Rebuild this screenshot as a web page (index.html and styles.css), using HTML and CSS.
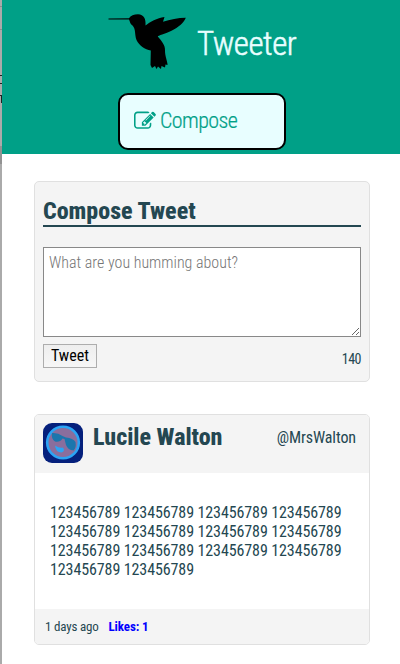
FILE: index.html
```html
<!DOCTYPE html>
<html lang="en">
<head>
<meta charset="utf-8">
<title>Tweeter</title>
<link rel="stylesheet" href="styles.css">
</head>
<body>
<div class="edge"><svg width="2" height="664" viewBox="0 0 2 664"><path d="M0 6.500h2M0 29.500h2" stroke="#8c8c8c"/><path d="M0 75.500h2M0 83.500h2M0 95.500h2M1.500 95v8" stroke="#222"/><path d="M0 146h2v18H0z" fill="#929292"/></svg></div>
<div class="page">
  <header class="nav">
    <div class="brand">
      <svg class="bird" viewBox="0 0 80 58" width="80" height="58"><path d="M0.500 4.500V5.500L21 5.500C22 7.500 22 10 24.500 11.500C28 15 26.500 21 28.500 26C31 31.500 37 35.500 42.800 36.500L42.500 51L44 54L47 52L48.500 55L50 52.500L53 55L53.500 52L57 53.500L57.500 50.500L59.500 51C60 49 56.800 42 57 36.500C57.500 31 53 26.500 49.800 22.500C50 21.500 57 20 63 17C71 13 76 8.500 77.800 3.700C70 3.800 62 5.500 55 7.800L56.500 3C49 4 42 8 37.500 11.500C38 5 36 0.500 30 0.300C26 0.300 22.500 1.800 21 4.200Z"/></svg>
      <h1>Tweeter</h1>
    </div>
    <div class="compose-btn">
      <svg viewBox="0 0 1792 1792" width="22" height="22" fill="currentColor"><path d="M888 1184l116-116-152-152-116 116v56h96v96h56zm440-720q-16-16-33 1l-350 350q-17 17-1 33t33-1l350-350q17-17 1-33zm80 594v190q0 119-84.500 203.500t-203.500 84.500h-832q-119 0-203.500-84.500t-84.500-203.500v-832q0-119 84.500-203.500t203.500-84.500h832q63 0 117 25 15 7 18 23 3 17-9 29l-49 49q-14 14-32 8-23-6-45-6h-832q-66 0-113 47t-47 113v832q0 66 47 113t113 47h832q66 0 113-47t47-113v-126q0-13 9-22l64-64q15-15 35-7t20 29zm-96-738l288 288-672 672h-288v-288zm444 132l-92 92-288-288 92-92q28-28 68-28t68 28l152 152q28 28 28 68t-28 68z"/></svg>
      <span>Compose</span>
    </div>
  </header>
  <main>
    <section class="card new-tweet">
      <h2>Compose Tweet</h2>
      <textarea placeholder="What are you humming about?"></textarea>
      <div class="actions"><button>Tweet</button><span class="counter">140</span></div>
    </section>
    <article class="card tweet">
      <header>
        <svg class="avatar" viewBox="0 0 40 40" width="40" height="40"><rect width="40" height="40" rx="9" fill="#05207c"/><circle cx="20" cy="19.500" r="15.800" fill="#8a6e9d" stroke="#2ba4f5" stroke-width="2.600"/><path d="M9 10Q15 9.500 19.500 13L23 14.500Q30 15 32.500 19Q33.500 25 30.500 27.500Q25 27 23 22L21.500 16L19.500 15.500Q17 19.500 12 18.500Q8 16 9 10Z" fill="#1b76ad"/><path d="M12 22.500Q16.500 25.500 20 24.500Q22.500 28 18.500 29.500Q12.500 29 12 22.500Z" fill="#2ba4f5"/></svg>
        <h2>Lucile Walton</h2>
        <span class="handle">@MrsWalton</span>
      </header>
      <p>123456789 123456789 123456789 123456789 123456789 123456789 123456789 123456789 123456789 123456789 123456789 123456789 123456789 123456789</p>
      <footer><span>1 days ago</span><b>Likes: 1</b></footer>
    </article>
  </main>
</div>
</body>
</html>
```
FILE: styles.css
```css
* { box-sizing: border-box; }
body {
  margin: 0;
  display: flex;
  height: 664px;
  overflow: hidden;
  background: #fff;
  color: #244751;
  font-family: "Roboto Condensed", Roboto, sans-serif;
  font-stretch: 75%;
  font-weight: 300;
}
h1, h2, p { margin: 0; }
svg { display: block; flex: none; }
.edge { width: 2px; background: #aaa; }
.page { width: 398px; }
.nav { height: 154px; background: #00a087; }
.brand { display: flex; height: 93px; padding: 14px 0 0 106px; }
.brand h1 {
  margin: 9px 0 0 9px;
  color: #e8feff;
  font-size: 33px;
  line-height: 42px;
  font-weight: 300;
  letter-spacing: -0.5px;
  -webkit-text-stroke: 0.5px #e8feff;
}
.compose-btn {
  display: flex;
  width: 168px;
  height: 57px;
  margin-left: 116px;
  padding: 15px 0 0 14px;
  border: 2px solid #000;
  border-radius: 10px;
  background: #e8feff;
  color: #00a087;
  font-size: 22px;
  line-height: 22px;
  font-weight: 300;
  letter-spacing: -0.6px;
}
.compose-btn span { margin-left: 4px; -webkit-text-stroke: 0.2px #00a087; }
main { padding: 27px 30px 0 32px; }
.card { border: 1px solid #e0e0e0; border-radius: 5px; background: #f4f4f4; overflow: hidden; }
.card h2 { font-size: 24px; line-height: 28px; font-weight: 800; letter-spacing: 0; }
.new-tweet { height: 201px; padding: 15px 8px 0; }
.new-tweet h2 { height: 30px; border-bottom: 2px solid #244751; }
textarea {
  display: block;
  width: 100%;
  height: 90px;
  margin-top: 20px;
  padding: 5px;
  border: 1px solid #888;
  background: #fff;
  font: inherit;
  font-size: 16px;
  line-height: 19px;
}
textarea::placeholder { color: #757575; }
.actions { display: flex; justify-content: space-between; margin-top: 7px; }
button {
  width: 54px;
  height: 24px;
  padding: 0 0 2px;
  border: 1px solid #adadad;
  background: linear-gradient(#eee, #f6f6f6);
  color: #000;
  font: inherit;
  font-weight: 400;
  font-size: 16px;
}
.counter { margin-top: 7px; font-size: 14px; line-height: 17px; font-weight: 400; letter-spacing: -0.5px; }
.tweet { height: 231px; margin-top: 32px; background: #fff; }
.tweet header { display: flex; height: 58px; padding: 8px 13px 0 8px; background: #f4f4f4; }
.tweet h2 { margin-left: 10px; }
.handle { margin: 5px 0 0 auto; font-size: 16px; line-height: 19px; font-weight: 400; letter-spacing: -0.1px; }
.tweet p { height: 136px; padding: 30px 15px 0; font-size: 16px; line-height: 19px; font-weight: 400; letter-spacing: -0.1px; }
.tweet footer { display: flex; height: 35px; padding: 9px 10px; background: #f4f4f4; font-size: 13px; line-height: 17px; font-weight: 400; letter-spacing: -0.2px; }
.tweet footer b { margin-left: 10px; color: #00f; font-weight: 700; letter-spacing: -0.1px; }
```
